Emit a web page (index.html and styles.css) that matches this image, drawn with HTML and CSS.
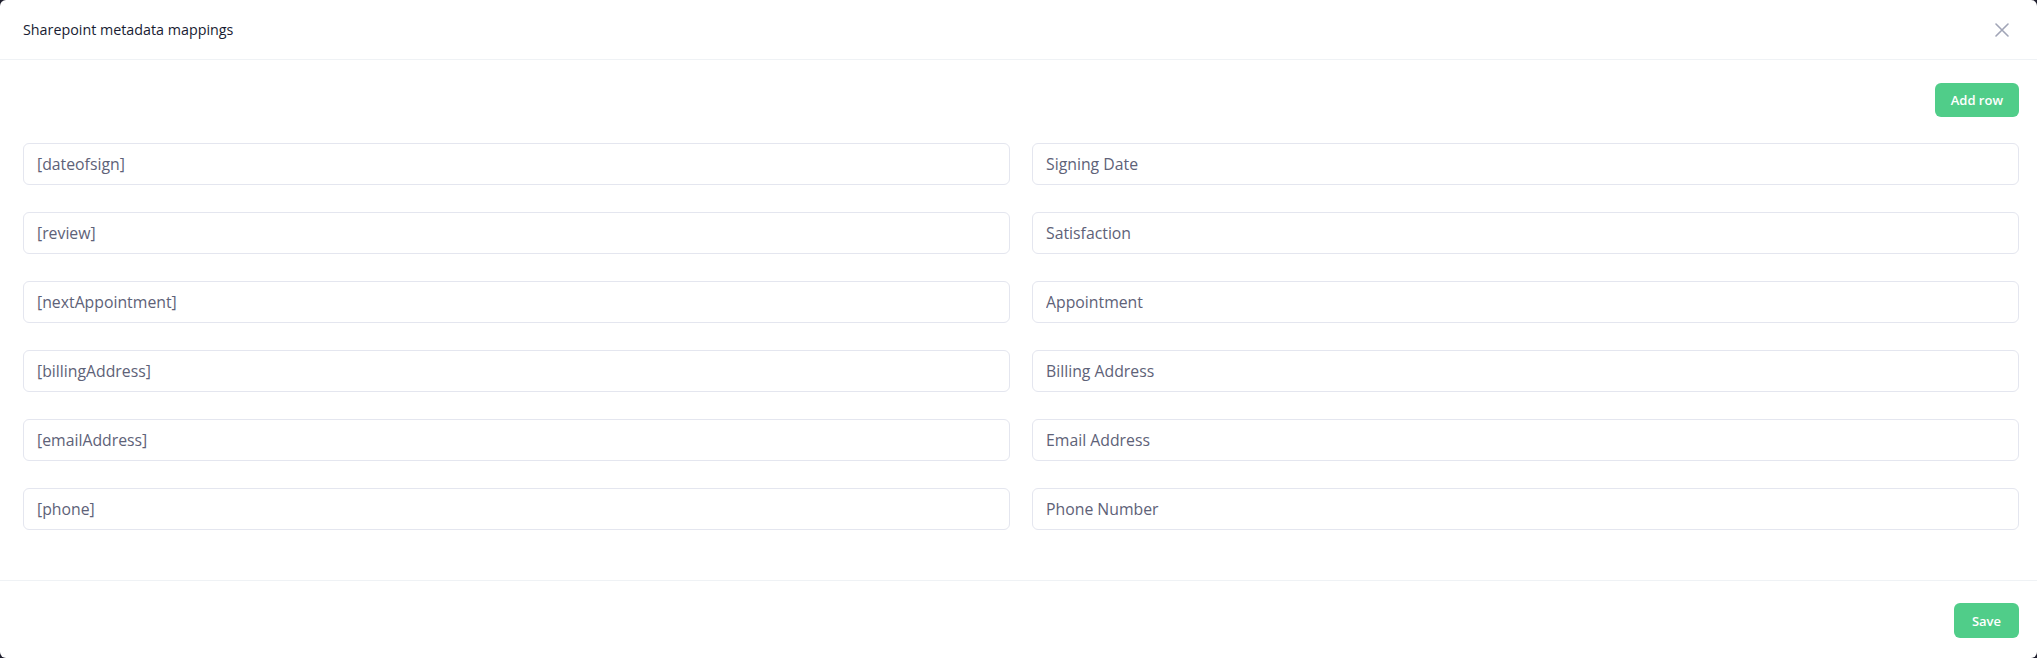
FILE: index.html
```html
<!DOCTYPE html>
<html lang="en">
<head>
	<meta charset="UTF-8">
	<title>Sharepoint metadata mappings</title>
	<link rel="stylesheet" href="styles.css">
</head>
<body>
<div class="modal">
	<div class="modalHeader">
		<h5 class="modalTitle">Sharepoint metadata mappings</h5>
		<button class="closeBtn" type="button" aria-label="Close">
			<svg width="14" height="14" viewBox="0 0 14 14"><path d="M1 1L13 13M13 1L1 13" stroke="currentColor" stroke-width="1.6" stroke-linecap="round"/></svg>
		</button>
	</div>
	<div class="modalBody">
		<div class="toolbar">
			<button class="btn" type="button">Add row</button>
		</div>
		<div class="mappings">
			<input class="field" type="text" value="[dateofsign]">
			<input class="field" type="text" value="Signing Date">
			<input class="field" type="text" value="[review]">
			<input class="field" type="text" value="Satisfaction">
			<input class="field" type="text" value="[nextAppointment]">
			<input class="field" type="text" value="Appointment">
			<input class="field" type="text" value="[billingAddress]">
			<input class="field" type="text" value="Billing Address">
			<input class="field" type="text" value="[emailAddress]">
			<input class="field" type="text" value="Email Address">
			<input class="field" type="text" value="[phone]">
			<input class="field" type="text" value="Phone Number">
		</div>
	</div>
	<div class="modalFooter">
		<button class="btn btnSave" type="button">Save</button>
	</div>
</div>
</body>
</html>
```

FILE: styles.css
```css
html, body {
	margin:0;
	padding:0;
	background:#1e1e2d;
}
body {
	font-family: "Open Sans", "Noto Sans", sans-serif;
}

.modal {
	background:#fff;
	border-radius:6px;
	height:658px;
	box-sizing: border-box;
	display:flex;
	flex-direction: column;
}

.modalHeader {
	height:59px;
	display:flex;
	align-items: center;
	justify-content: space-between;
	padding:0 28px 0 23px;
	border-bottom:1px solid #eff2f5;
}
.modalTitle {
	margin:0;
	font-size:14.3px;
	font-weight:400;
	color:#181c32;
}
.closeBtn {
	border:0;
	background:none;
	padding:0;
	width:14px;
	height:14px;
	color:#a1a5b7;
	display:flex;
}

.modalBody {
	flex:auto;
	padding:23px 18px 0 23px;
}
.toolbar {
	display:flex;
	justify-content: flex-end;
	margin-bottom:26px;
}

.btn {
	border:0;
	border-radius:6px;
	background:#50cd89;
	color:#fff;
	font-family: inherit;
	font-size:13px;
	font-weight:600;
	height:34px;
	padding:0 16px;
}
.btnSave {
	height:35px;
	padding:0 18px;
}

.mappings {
	display:grid;
	grid-template-columns: 1fr 1fr;
	column-gap:22px;
	row-gap:27px;
}
.field {
	height:42px;
	box-sizing: border-box;
	border:1px solid #e4e6ef;
	border-radius:6px;
	padding:0 13px;
	font-family: inherit;
	font-size:15.8px;
	color:#5e6278;
	outline:none;
}

.modalFooter {
	display:flex;
	justify-content: flex-end;
	padding:22px 18px 20px 23px;
	border-top:1px solid #eff2f5;
}
```
